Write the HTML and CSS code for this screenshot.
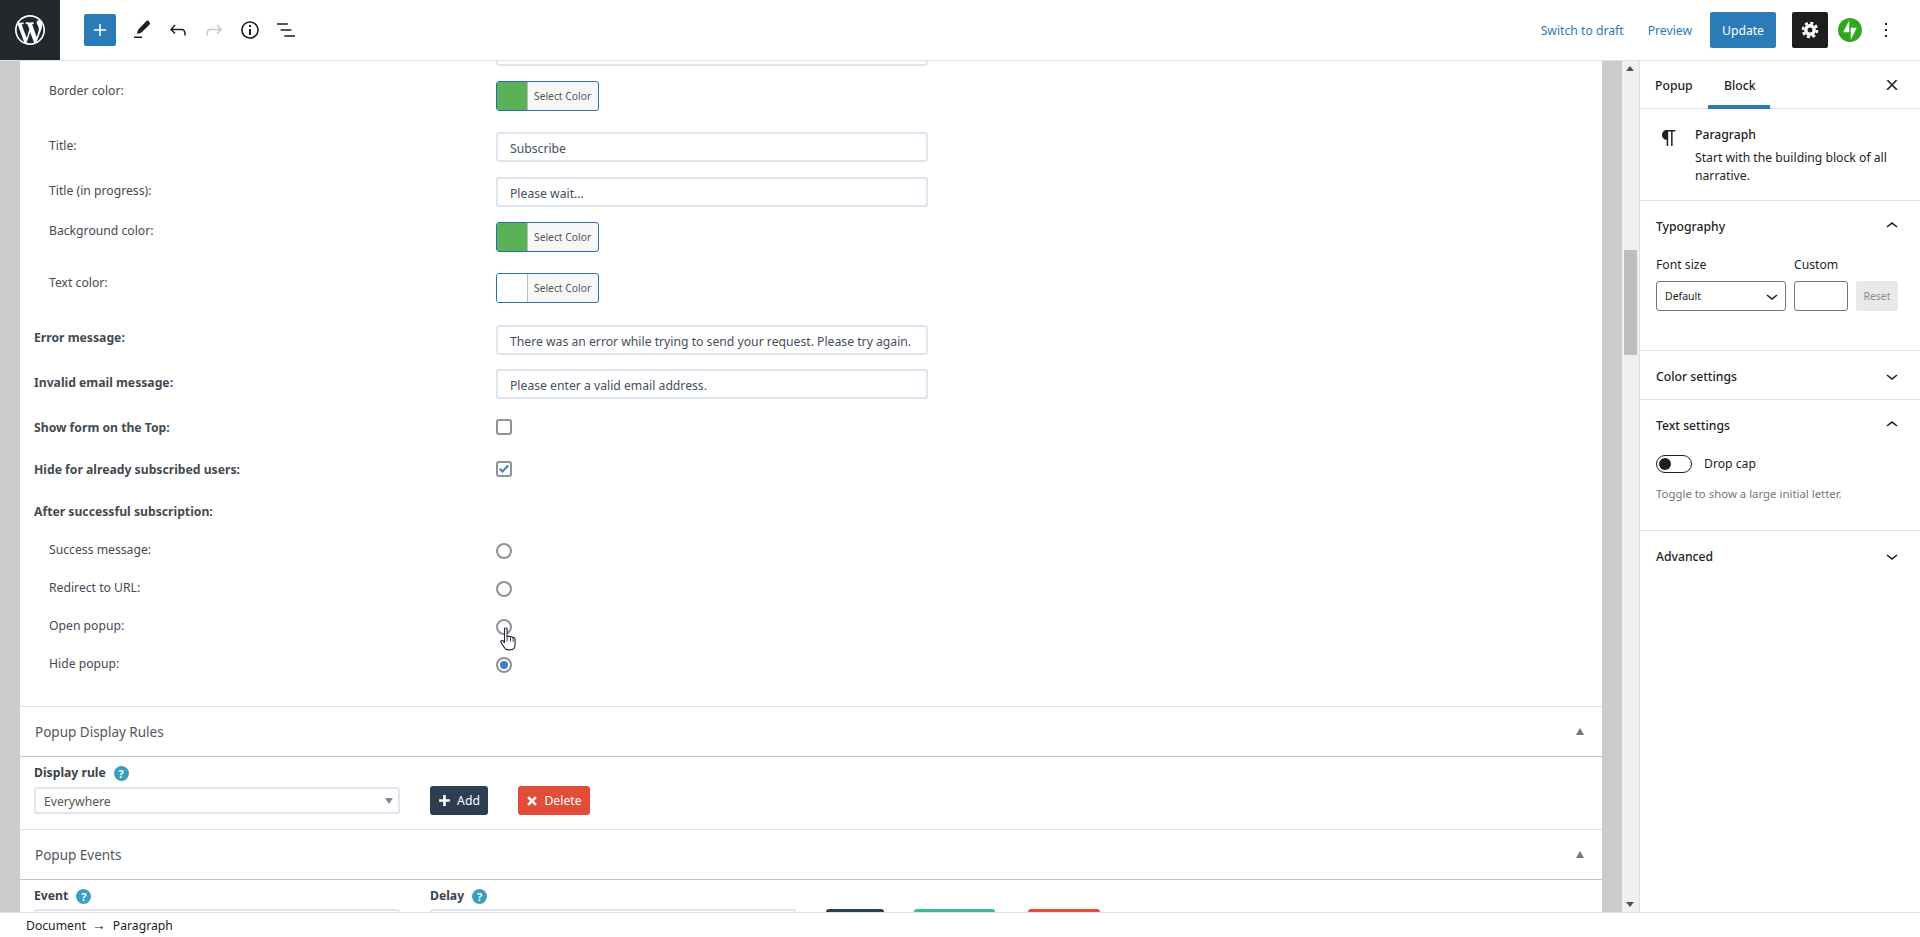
FILE: index.html
```html
<!DOCTYPE html>
<html lang="en">
<head>
<meta charset="utf-8">
<title>Edit Popup</title>
<link rel="stylesheet" href="styles.css">
</head>
<body>
<header class="topbar">
  <div class="wp-logo"><svg viewBox="0 0 20 20" width="30" height="30"><path fill="#fff" d="M20 10c0-5.51-4.49-10-10-10C4.48 0 0 4.49 0 10c0 5.52 4.48 10 10 10 5.51 0 10-4.48 10-10zM7.78 15.37L4.37 6.22c.55-.02 1.17-.08 1.17-.08.5-.06.44-1.13-.06-1.11 0 0-1.45.11-2.37.11-.18 0-.37 0-.58-.01C4.12 2.69 6.87 1.11 10 1.11c2.33 0 4.45.87 6.05 2.34-.68-.11-1.65.39-1.65 1.58 0 .74.45 1.36.9 2.1.35.61.55 1.36.55 2.46 0 1.49-1.4 5-1.4 5l-3.03-8.37c.54-.02.82-.17.82-.17.5-.05.44-1.25-.06-1.22 0 0-1.44.12-2.38.12-.87 0-2.33-.12-2.33-.12-.5-.03-.56 1.2-.06 1.22l.92.08 1.26 3.41zM17.41 10c.24-.64.74-1.87.43-4.25.7 1.29 1.05 2.71 1.05 4.25 0 3.29-1.73 6.24-4.4 7.78.97-2.59 1.94-5.2 2.92-7.78zM6.1 18.09C3.12 16.65 1.11 13.53 1.11 10c0-1.3.23-2.48.72-3.59C3.25 10.3 4.67 14.2 6.1 18.09zm4.03-6.63l2.58 6.98c-.86.29-1.76.45-2.71.45-.79 0-1.57-.11-2.29-.33.81-2.38 1.62-4.74 2.42-7.1z"/></svg></div>
  <div class="tools">
    <span class="add-btn"><svg viewBox="0 0 24 24" width="24" height="24"><path fill="#fff" d="M18 11.2h-5.2V6h-1.6v5.2H6v1.6h5.2V18h1.6v-5.2H18z"/></svg></span>
    <span class="tool"><svg viewBox="0 0 24 24" width="24" height="24"><path fill="#1e1e1e" d="M4 20h8v-1.5H4V20zM18.400 2.800c-.6-.6-1.500-.5-2 .1L8.800 11c-.4.4-.7.9-.9 1.400l-1 3.700 3.700-1.100c.5-.2 1-.5 1.400-.9L19.600 6.500c.6-.6.6-1.500 0-2.100z"/></svg></span>
    <span class="tool"><svg viewBox="0 0 24 24" width="24" height="24"><path fill="#1e1e1e" d="M18.3 11.7c-.6-.6-1.4-.9-2.3-.9H6.7l2.9-3.3-1.1-1-4.5 5L8.5 16l1-1-2.7-2.7H16c.5 0 .9.2 1.3.5 1 1 1 3.4 1 4.5v.3h1.500v-.2c0-1.500 0-4.300-1.500-5.700z"/></svg></span>
    <span class="tool"><svg viewBox="0 0 24 24" width="24" height="24"><path fill="#c8c8c8" d="M15.6 6.5l-1.1 1 2.9 3.3H8c-.9 0-1.7.3-2.3.9-1.4 1.5-1.4 4.2-1.4 5.6v.2h1.5v-.3c0-1.1 0-3.5 1-4.5.3-.3.7-.5 1.3-.5h9.2L14.5 15l1.1 1.1 4.6-4.6-4.6-5z"/></svg></span>
    <span class="tool"><svg viewBox="0 0 24 24" width="24" height="24"><path fill="#1e1e1e" d="M12 3.2c-4.8 0-8.8 3.9-8.8 8.8 0 4.8 3.9 8.8 8.8 8.8 4.8 0 8.8-3.9 8.8-8.8 0-4.8-4-8.8-8.8-8.8zm0 16c-4 0-7.2-3.3-7.2-7.2C4.8 8 8 4.8 12 4.8s7.2 3.3 7.2 7.2c0 4-3.2 7.2-7.2 7.2zM11 17h2v-6h-2v6zm0-8h2V7h-2v2z"/></svg></span>
    <span class="tool"><svg viewBox="0 0 24 24" width="24" height="24"><path fill="#1e1e1e" d="M13.8 5.2H3v1.5h10.8V5.2zm-3.6 12v1.5H21v-1.5H10.2zm7.2-6H6.6v1.5h10.8v-1.5z"/></svg></span>
  </div>
  <div class="actions">
    <a class="link switch">Switch to draft</a>
    <a class="link preview">Preview</a>
    <span class="update">Update</span>
    <span class="gear"><svg viewBox="0 0 24 24" width="24" height="24"><circle cx="12" cy="12" r="4.2" fill="none" stroke="#fff" stroke-width="3.4"/><circle cx="12" cy="12" r="7" fill="none" stroke="#fff" stroke-width="2.6" stroke-dasharray="3.1 2.4"/></svg></span>
    <span class="jetpack"><svg viewBox="0 0 32 32" width="24" height="24"><path fill="#2fa81f" d="M16 0C7.2 0 0 7.2 0 16s7.2 16 16 16 16-7.2 16-16S24.8 0 16 0zM15 19H7l8-16v16zm2 10V13h8l-8 16z"/></svg></span>
    <span class="more"><svg viewBox="0 0 24 24" width="24" height="24"><path fill="#1e1e1e" d="M13 19h-2v-2h2v2zm0-6h-2v-2h2v2zm0-6h-2V5h2v2z"/></svg></span>
  </div>
</header>

<div class="main">
  <div class="editor">
    <div class="card">
      <div class="form">
        <div class="row sub"><span class="lbl"></span><div class="text-input"></div></div>
        <div class="row sub g15"><span class="lbl">Border color:</span><div class="color"><span class="swatch green"></span><span class="color-txt">Select Color</span></div></div>
        <div class="row sub g21 drop4"><span class="lbl">Title:</span><div class="text-input">Subscribe</div></div>
        <div class="row sub g15 drop4"><span class="lbl">Title (in progress):</span><div class="text-input">Please wait...</div></div>
        <div class="row sub g15 lift1"><span class="lbl">Background color:</span><div class="color"><span class="swatch green"></span><span class="color-txt">Select Color</span></div></div>
        <div class="row sub g21"><span class="lbl">Text color:</span><div class="color"><span class="swatch"></span><span class="color-txt">Select Color</span></div></div>
        <div class="row g22 drop3"><b class="lbl">Error message:</b><div class="text-input">There was an error while trying to send your request. Please try again.</div></div>
        <div class="row g14 drop4"><b class="lbl">Invalid email message:</b><div class="text-input">Please enter a valid email address.</div></div>
        <div class="row g20 tall lift1"><b class="lbl">Show form on the Top:</b><span class="check"></span></div>
        <div class="row g26 tall lift1"><b class="lbl">Hide for already subscribed users:</b><span class="check"><svg viewBox="0 0 12 12" width="12" height="12"><path fill="#3b7fc4" d="M1 6.4l1.600-1.500 2 2L9.400 1.600 11 3 4.600 10z"/></svg></span></div>
        <div class="row g26 tall lift1"><b class="lbl">After successful subscription:</b></div>
        <div class="row sub g24 tall lift3"><span class="lbl">Success message:</span><span class="radio"></span></div>
        <div class="row sub g22 tall lift3"><span class="lbl">Redirect to URL:</span><span class="radio"></span></div>
        <div class="row sub g22 tall lift3"><span class="lbl">Open popup:</span><span class="radio"></span></div>
        <div class="row sub g22 tall lift3"><span class="lbl">Hide popup:</span><span class="radio on"></span></div>
      </div>

      <section class="sec-head"><span>Popup Display Rules</span><i class="tri"></i></section>
      <div class="rule-row">
        <div class="field">
          <div class="field-label"><b>Display rule</b><span class="help">?</span></div>
          <div class="select">Everywhere<i class="tri-down"></i></div>
        </div>
        <span class="btn dark"><svg viewBox="0 0 12 12" width="13" height="13"><path fill="#fff" d="M4.800 1h2.400v3.800H11v2.400H7.200V11H4.800V7.200H1V4.800h3.800z"/></svg>Add</span>
        <span class="btn red"><svg viewBox="0 0 12 12" width="12" height="12"><path fill="#fff" d="M3 1.200L6 4.200l3-3L10.800 3l-3 3 3 3L9 10.800l-3-3-3 3L1.200 9l3-3-3-3z"/></svg>Delete</span>
      </div>

      <section class="sec-head"><span>Popup Events</span><i class="tri"></i></section>
      <div class="rule-row events">
        <div class="field">
          <div class="field-label"><b>Event</b><span class="help">?</span></div>
          <div class="select"></div>
        </div>
        <div class="field">
          <div class="field-label"><b>Delay</b><span class="help">?</span></div>
          <div class="select"></div>
        </div>
        <span class="btn dark"></span>
        <span class="btn teal"></span>
        <span class="btn red bw72"></span>
      </div>
    </div>
    <div class="hand"><svg viewBox="0 0 18 24" width="18" height="24"><path fill="#fff" stroke="#1f2540" stroke-width="1.100" stroke-linejoin="round" d="M4.500 2.200c0-1.600 2.600-1.600 2.600 0v7.300l2.400-.3c.8 0 1 .6 1 .9.900-.7 2.200-.4 2.300.6 1-.5 2.300 0 2.300 1.200v5.600c0 3-1.800 5.400-5.200 5.400H8.300c-2 0-3.300-1-4.200-2.600L1 15.400c-.8-1.500 1-2.700 2.100-1.500l1.400 1.700z"/><path fill="none" stroke="#1f2540" stroke-width=".9" d="M7.100 9.500v5M10.500 10.100v4.500M13.100 11v3.800"/></svg></div>
  </div>

  <div class="scrollbar">
    <i class="sb-up"></i>
    <div class="sb-thumb"></div>
    <i class="sb-down"></i>
  </div>

  <aside class="sidebar">
    <div class="tabs">
      <span class="tab">Popup</span>
      <span class="tab active">Block</span>
      <svg class="close" viewBox="0 0 24 24" width="16" height="16"><path fill="#1e1e1e" stroke="#1e1e1e" stroke-width="1.200" d="M13 11.800l6.100-6.300-1-1-6.100 6.200-6.100-6.200-1 1 6.100 6.300-6.500 6.700 1 1 6.500-6.600 6.500 6.600 1-1z"/></svg>
    </div>
    <div class="block-card">
      <svg class="para" viewBox="0 0 24 24" width="24" height="24"><path fill="#1e1e1e" d="M18.300 4H9.900v-.1l-.9.2c-2.300.4-4 2.400-4 4.800s1.700 4.400 4 4.800l.7.1V20h1.500V5.500h2.900V20h1.500V5.500h2.700V4z"/></svg>
      <div class="block-text">
        <div class="block-title">Paragraph</div>
        <p>Start with the building block of all narrative.</p>
      </div>
    </div>
    <div class="panel typo">
      <div class="panel-head"><span>Typography</span><svg viewBox="0 0 24 24" width="24" height="24"><path fill="#1e1e1e" d="M6.500 12.400L12 8l5.500 4.400-.9 1.200L12 10l-4.500 3.600-1-1.200z"/></svg></div>
      <div class="font-grid">
        <label>Font size</label><label>Custom</label><span></span>
        <div class="fs-select">Default<svg viewBox="0 0 24 24" width="24" height="24"><path fill="#1e1e1e" d="M17.500 11.600L12 16l-5.500-4.400.9-1.200L12 14l4.500-3.600 1 1.200z"/></svg></div>
        <div class="fs-input"></div>
        <div class="fs-reset">Reset</div>
      </div>
    </div>
    <div class="panel closed">
      <div class="panel-head"><span>Color settings</span><svg viewBox="0 0 24 24" width="24" height="24"><path fill="#1e1e1e" d="M17.500 11.600L12 16l-5.500-4.400.9-1.200L12 14l4.500-3.600 1 1.200z"/></svg></div>
    </div>
    <div class="panel textset">
      <div class="panel-head"><span>Text settings</span><svg viewBox="0 0 24 24" width="24" height="24"><path fill="#1e1e1e" d="M6.500 12.400L12 8l5.500 4.400-.9 1.200L12 10l-4.500 3.600-1-1.200z"/></svg></div>
      <div class="toggle-row"><span class="toggle"><i></i></span><span>Drop cap</span></div>
      <p class="hint">Toggle to show a large initial letter.</p>
    </div>
    <div class="panel closed last">
      <div class="panel-head"><span>Advanced</span><svg viewBox="0 0 24 24" width="24" height="24"><path fill="#1e1e1e" d="M17.500 11.600L12 16l-5.500-4.400.9-1.200L12 14l4.500-3.600 1 1.200z"/></svg></div>
    </div>
  </aside>
</div>

<footer class="crumbs"><span>Document</span><span class="arrow">→</span><span>Paragraph</span></footer>
</body>
</html>
```

FILE: styles.css
```css
* { box-sizing: border-box; }
html, body { height: 100%; }
body {
  margin: 0;
  height: 100vh;
  overflow: hidden;
  display: flex;
  flex-direction: column;
  background: #fff;
  color: #1e1e1e;
  font: 12.2px/20px "Noto Sans", "Open Sans", sans-serif;
}
svg { display: block; flex: none; }

/* top bar */
.topbar {
  height: 61px;
  flex: none;
  display: flex;
  align-items: center;
  border-bottom: 1px solid #e0e0e0;
  background: #fff;
}
.wp-logo {
  width: 60px;
  height: 60px;
  background: #23282d;
  display: flex;
  align-items: center;
  justify-content: center;
}
.tools { display: flex; align-items: center; margin-left: 24px; }
.add-btn {
  width: 32px;
  height: 32px;
  background: #2b7bb9;
  border-radius: 2px;
  display: flex;
  align-items: center;
  justify-content: center;
  margin-right: 8px;
}
.tool { width: 36px; height: 36px; display: flex; align-items: center; justify-content: center; }
.actions { margin-left: auto; display: flex; align-items: center; }
.link { color: #2b7bb9; padding-top: 2px; }
.switch { margin-right: 24px; }
.preview { margin-right: 18px; }
.update {
  width: 66px;
  height: 36px;
  padding-top: 2px;
  background: #2b7bb9;
  color: #fff;
  border-radius: 2px;
  display: flex;
  align-items: center;
  justify-content: center;
  margin-right: 16px;
}
.gear {
  width: 36px;
  height: 36px;
  background: #1e1e1e;
  border-radius: 2px;
  display: flex;
  align-items: center;
  justify-content: center;
  margin-right: 10px;
}
.jetpack { width: 24px; height: 24px; margin-right: 12px; }
.more { width: 24px; height: 24px; margin-right: 22px; }

/* main */
.main { flex: 1; min-height: 0; display: flex; overflow: hidden; }
.editor {
  position: relative;
  flex: 1;
  min-width: 0;
  background: #cbcbcb;
  padding: 0 20px;
  overflow: hidden;
}
.card { background: #fff; margin-top: -25px; min-height: 1000px; color: #444; }
.form { padding-bottom: 33px; }
.row {
  display: grid;
  grid-template-columns: 476px 432px;
  align-items: start;
  height: 30px;
}
.tall { height: 16px; }
.lbl { padding-left: 14px; line-height: 20px; color: #444a52; }
b.lbl { font-weight: 700; }
.sub .lbl { padding-left: 29px; }
.g14 { margin-top: 14px; }
.g15 { margin-top: 15px; }
.g20 { margin-top: 20px; }
.g21 { margin-top: 21px; }
.g22 { margin-top: 22px; }
.g24 { margin-top: 24px; }
.g26 { margin-top: 26px; }
.lift1 .lbl { margin-top: -1px; }
.lift3 .lbl { margin-top: -3px; }
.drop3 .lbl { margin-top: 3px; }
.drop4 .lbl { margin-top: 4px; }
.text-input {
  height: 30px;
  border: 2px solid #e0e4f0;
  border-radius: 3px;
  padding: 0 9px 0 12px;
  line-height: 30px;
  color: #444f5e;
  white-space: nowrap;
  overflow: hidden;
}
.color {
  width: 103px;
  height: 30px;
  border: 1px solid #2b6cb0;
  border-radius: 3px;
  display: flex;
  background: #f7f7f7;
  overflow: hidden;
}
.swatch { width: 31px; background: #fff; border-right: 1px solid #bbb; flex: none; }
.swatch.green { background: #59b255; }
.color-txt { font-size: 10.3px; line-height: 28px; color: #555; padding-left: 6px; white-space: nowrap; }
.check, .radio {
  width: 16px;
  height: 16px;
  border: 2px solid #8e9297;
  background: #fff;
  display: flex;
  align-items: center;
  justify-content: center;
}
.check { border-radius: 3px; }
.radio { border-radius: 50%; }
.radio.on::after {
  content: "";
  width: 8px;
  height: 8px;
  border-radius: 50%;
  background: #3b7fc4;
}

/* sections */
.sec-head {
  height: 51px;
  border-top: 1px solid #e0e0e0;
  border-bottom: 1px solid #c4c4c4;
  display: flex;
  align-items: center;
  justify-content: space-between;
  padding: 0 14px 0 15px;
  color: #50575e;
  font-size: 13.5px;
}
.tri { width: 0; height: 0; border: 4px solid transparent; border-bottom: 7px solid #777; border-top: 0; margin-right: 4px; }
.rule-row {
  display: flex;
  align-items: flex-end;
  gap: 30px;
  padding: 5px 14px 15px;
}
.field { width: 366px; flex: none; }
.field-label { display: flex; align-items: center; height: 20px; padding-top: 2px; margin-bottom: 5px; }
.field-label b { color: #3c434a; }
.help {
  width: 15px;
  height: 15px;
  border-radius: 50%;
  background: #3a9fbf;
  color: #fff;
  font-size: 11px;
  font-weight: 700;
  line-height: 15px;
  text-align: center;
  margin-left: 8px;
}
.select {
  height: 27px;
  border: 2px solid #e0e4f0;
  border-radius: 3px;
  padding: 0 8px;
  line-height: 25px;
  color: #555;
  position: relative;
}
.tri-down { position: absolute; right: 5px; top: 9px; border: 4px solid transparent; border-top: 6px solid #888; border-bottom: 0; }
.btn {
  height: 29px;
  margin-bottom: -1px;
  border-radius: 3px;
  color: #fff;
  display: flex;
  align-items: center;
  justify-content: center;
  gap: 6px;
  flex: none;
}
.dark { background: #2c3e50; width: 58px; }
.red { background: #e34c39; width: 72px; }
.teal { background: #3cb89a; width: 81px; }
.events .field-label { margin-bottom: 4px; }
.events .btn { margin-bottom: -2px; }
.bw72 { margin-left: 3px; }
.hand { position: absolute; left: 500px; top: 566px; }

/* scrollbar */
.scrollbar { width: 17px; flex: none; background: #f0f0f0; position: relative; }
.sb-thumb { position: absolute; left: 2px; top: 189px; width: 13px; height: 105px; background: #bebebe; }
.sb-up, .sb-down { position: absolute; left: 4px; border: 4px solid transparent; }
.sb-up { top: 5px; border-bottom: 5px solid #505050; border-top: 0; }
.sb-down { bottom: 5px; border-top: 5px solid #505050; border-bottom: 0; }

/* sidebar */
.sidebar { width: 281px; flex: none; border-left: 1px solid #e0e0e0; background: #fff; }
.tabs { height: 48px; display: flex; border-bottom: 1px solid #e0e0e0; position: relative; }
.tab { height: 48px; line-height: 50px; padding-left: 15px; font-weight: 500; width: 68px; }
.tab.active { box-shadow: inset 0 -4px 0 #2b7bb9; width: 62px; padding-left: 16px; }
.close { position: absolute; right: 20px; top: 16px; }
.block-card { height: 92px; border-bottom: 1px solid #e0e0e0; display: flex; padding: 16px 16px 0 17px; }
.para { margin-top: 1px; margin-right: 14px; }
.block-title { font-weight: 500; line-height: 20px; }
.block-card p { margin: 4px 0 0; line-height: 18px; width: 205px; }
.panel { border-bottom: 1px solid #e0e0e0; padding: 0 22px 0 16px; }
.panel-head { height: 48px; display: flex; align-items: center; justify-content: space-between; font-weight: 500; margin-right: -6px; }
.panel-head span { padding-top: 2px; }
.typo { height: 150px; padding-top: 1px; }
.closed { height: 49px; padding-top: 1px; }
.closed.last { border-bottom: 0; }
.font-grid {
  display: grid;
  grid-template-columns: 130px 54px 42px;
  column-gap: 8px;
  row-gap: 6px;
  margin-top: 5px;
  grid-template-rows: 20px 30px;
}
.font-grid label { line-height: 20px; }
.fs-select, .fs-input { height: 30px; border: 1px solid #757575; border-radius: 3px; }
.fs-select { display: flex; align-items: center; justify-content: space-between; padding: 0 1px 0 8px; font-size: 10.5px; }
.fs-reset { height: 30px; background: #e9e9e9; border-radius: 2px; color: #8a8a8a; font-size: 10.5px; line-height: 30px; text-align: center; }
.textset { height: 131px; padding-top: 1px; }
.toggle-row { display: flex; align-items: center; gap: 12px; margin-top: 6px; height: 18px; }
.toggle { width: 36px; height: 18px; border: 1px solid #1e1e1e; border-radius: 9px; position: relative; }
.toggle i { position: absolute; left: 2px; top: 2px; width: 12px; height: 12px; border-radius: 50%; background: #1e1e1e; }
.hint { margin: 12px 0 0; font-size: 11.4px; line-height: 18px; color: #757575; white-space: nowrap; }

/* footer */
.crumbs {
  height: 25px;
  flex: none;
  border-top: 1px solid #e0e0e0;
  background: #fff;
  display: flex;
  align-items: center;
  padding: 2px 0 0 26px;
}
.arrow { margin: 0 7px 2px 6px; font-size: 14px; line-height: 18px; }
```
